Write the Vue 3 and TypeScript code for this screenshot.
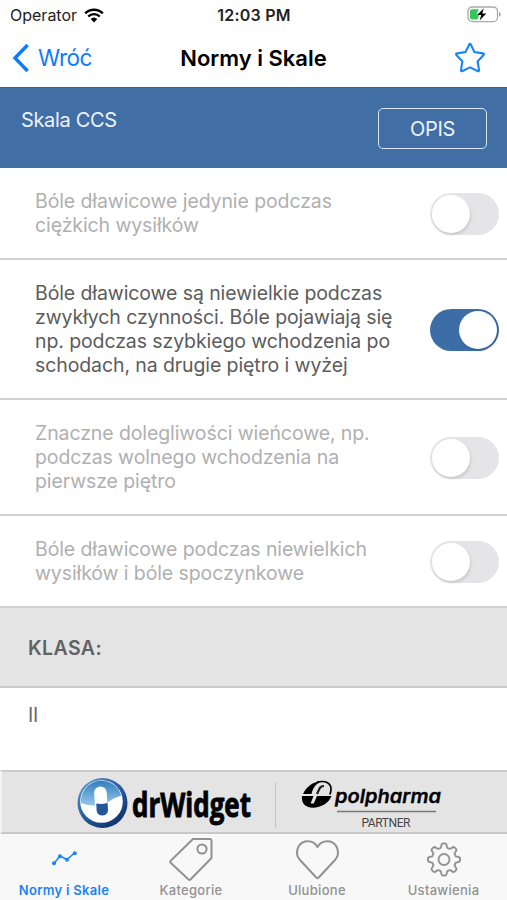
<script setup lang="ts">
import { ref } from 'vue'

interface Option {
  lines: string[]
  height: number
  on: boolean
}

const options = ref<Option[]>([
  { lines: ['Bóle dławicowe jedynie podczas', 'ciężkich wysiłków'], height: 92, on: false },
  {
    lines: [
      'Bóle dławicowe są niewielkie podczas',
      'zwykłych czynności. Bóle pojawiają się',
      'np. podczas szybkiego wchodzenia po',
      'schodach, na drugie piętro i wyżej',
    ],
    height: 140,
    on: true,
  },
  {
    lines: ['Znaczne dolegliwości wieńcowe, np.', 'podczas wolnego wchodzenia na', 'pierwsze piętro'],
    height: 116,
    on: false,
  },
  { lines: ['Bóle dławicowe podczas niewielkich', 'wysiłków i bóle spoczynkowe'], height: 92, on: false },
])

function select(index: number): void {
  options.value.forEach((o, i) => (o.on = i === index))
}

// Eight-toothed gear outline, sampled in polar coordinates
function gearOutline(cx: number, cy: number): string {
  const points: string[] = []
  for (let i = 0; i < 192; i++) {
    const a = (i / 192) * Math.PI * 2
    const r = 14 + 2.1 * Math.tanh(2.2 * Math.cos(8 * a))
    points.push(`${(cx + r * Math.sin(a)).toFixed(2)} ${(cy - r * Math.cos(a)).toFixed(2)}`)
  }
  return `M${points.join('L')}Z`
}
const gear = gearOutline(22, 22)
</script>

<template>
  <div class="screen">
    <div class="status">
      <span class="carrier">Operator</span>
      <svg class="wifi" width="20" height="15" viewBox="0 0 20 15">
        <path d="M1.2 5.4a12.6 12.6 0 0 1 17.6 0" />
        <path d="M4.2 8.5a8.3 8.3 0 0 1 11.6 0" />
        <path class="dot" d="M6.7 11.1a4.8 4.8 0 0 1 6.6 0L10 14.4z" />
      </svg>
      <span class="clock">12:03 PM</span>
      <svg class="battery" width="34" height="17" viewBox="0 0 34 17">
        <rect x="1" y="1" width="29.5" height="14.6" rx="4.2" fill="#fff" stroke="#aaa" stroke-width="1.3" />
        <path d="M32 5.8q1.800.6 1.800 2.500t-1.800 2.500z" fill="#aaa" />
        <path d="M5 3.200h6.700L9.500 8.600l2.500.4-1.500 4.400H5a2 2 0 0 1-2-2V5.200a2 2 0 0 1 2-2z" fill="#35c759" />
        <path d="M16.800 2.200 10.200 9h4l-1.500 5.500L19.300 7.500h-4z" fill="#000" />
      </svg>
    </div>

    <header class="nav">
      <button class="back">
        <svg width="18" height="30" viewBox="0 0 18 30"><path d="M15.600 2 3 15l12.600 13" /></svg>
        <span>Wróć</span>
      </button>
      <h1>Normy i Skale</h1>
      <svg class="star" width="32" height="32" viewBox="0 0 32 32">
        <path d="M15.100 2.700q.9-1.800 1.800 0l3.600 7.400 8.400 1.300q1.900.4.5 1.800l-5.800 6.200 1.400 8.500q.2 1.900-1.500 1.100L16 25.300l-7.500 3.700q-1.700.8-1.500-1.100l1.400-8.500-5.800-6.200q-1.400-1.400.5-1.800l8.400-1.300z" />
      </svg>
    </header>

    <section class="scale">
      <span class="scale-name">Skala CCS</span>
      <button class="describe">OPIS</button>
    </section>

    <ul class="options">
      <li v-for="(o, i) in options" :key="i" :class="{ on: o.on }" :style="{ height: o.height + 'px' }">
        <p><span v-for="line in o.lines" :key="line">{{ line }}</span></p>
        <button class="switch" role="switch" :aria-checked="o.on" @click="select(i)"><i></i></button>
      </li>
    </ul>

    <h2>KLASA:</h2>
    <div class="result">II</div>

    <div class="sponsors">
      <svg width="507" height="60" viewBox="0 0 507 60">
        <defs>
          <linearGradient id="ring" x1="0" y1="0" x2=".8" y2="1">
            <stop offset="0" stop-color="#65a3d8" />
            <stop offset=".45" stop-color="#2d66a8" />
            <stop offset="1" stop-color="#0d2d65" />
          </linearGradient>
          <linearGradient id="glass" x1="0" y1="0" x2="0" y2="1">
            <stop offset="0" stop-color="#347dbd" />
            <stop offset="1" stop-color="#94c6e9" />
          </linearGradient>
        </defs>
        <circle cx="102.500" cy="31" r="25" fill="url(#ring)" />
        <circle cx="101.500" cy="29.500" r="21.300" fill="#fff" />
        <path d="M81 31a20.600 20.600 0 0 1 40.300-7.500Q113 26 107 31q-13 5-26 0z" fill="url(#glass)" />
        <rect x="94.800" y="14.500" width="12.600" height="32" rx="6.300" fill="#fff" transform="rotate(-4 101 31)" />
        <path d="M96.300 31.500q6 1.200 11.200-.8l.5 7q0 5.300-5.400 5.800-5.300 0-6-5z" fill="#24589a" />
        <text class="dr" x="132" y="44.500" textLength="119" lengthAdjust="spacingAndGlyphs">drWidget</text>
        <path d="M275.500 10v46" stroke="#c4c4c4" />
        <g transform="translate(302 8.500)">
          <path d="M0 15.500h11.500L8.600 23h3.200l3.200-7.500h14.500C27 22.500 19 27 11 27.200 3 27.200-.8 22.500 0 15.500z" fill="#000" />
          <path d="M1 13.500C4.500 6 11.500 1 20 .6 13.500 3.500 11 7.500 9.500 13.500z" fill="#000" />
          <path d="M15 1.700C24-.5 29.500 3 29 9.500q-.2 2.500-1.200 4.500" fill="none" stroke="#000" stroke-width="1.700" />
          <path d="M15 13.500l2.700-5.800Q18.800 5.500 22 5.500" fill="none" stroke="#222" stroke-width="2.200" />
        </g>
        <text class="pol" x="335" y="30.500" textLength="106" lengthAdjust="spacingAndGlyphs">polpharma</text>
        <path d="M337 39.500h99" stroke="#777" stroke-width="1.500" />
        <text class="partner" x="361.500" y="55" textLength="49">PARTNER</text>
      </svg>
    </div>

    <nav class="tabs">
      <a class="active">
        <svg width="44" height="44" viewBox="0 0 44 44">
          <path d="m12 29.500 6-7.500 7 3.500 7.500-6.500" fill="none" stroke="currentColor" stroke-width="1.500" />
          <g fill="currentColor"><circle cx="12" cy="29.300" r="2" /><circle cx="18" cy="22.200" r="2" /><circle cx="25" cy="25.700" r="2" /><circle cx="32.800" cy="19.300" r="2" /></g>
        </svg>
        <span>Normy i Skale</span>
      </a>
      <a>
        <svg width="44" height="44" viewBox="0 0 44 44">
          <g fill="none" stroke="currentColor" stroke-width="2" stroke-linejoin="round">
            <path d="M24 5h16.500q2 0 2 2v17L21.500 45.500q-1 .8-2 0L1.700 28.700q-1-1 0-2z" />
            <circle cx="33" cy="15" r="4.600" />
          </g>
        </svg>
        <span>Kategorie</span>
      </a>
      <a>
        <svg width="44" height="44" viewBox="0 0 44 44">
          <path d="M22.500 13C18 5 7.500 5.500 3.500 12.500Q-.2 20 5 26L21.500 43.800q1 .9 2 0L40 26Q45.200 20 41.500 12.500C37.500 5.500 27 5 22.500 13z" fill="none" stroke="currentColor" stroke-width="2" stroke-linejoin="round" />
        </svg>
        <span>Ulubione</span>
      </a>
      <a>
        <svg width="44" height="44" viewBox="0 0 44 44">
          <g fill="none" stroke="currentColor" stroke-width="1.900" transform="translate(0 3.500)">
            <path :d="gear" />
            <circle cx="22" cy="22" r="5.500" />
          </g>
        </svg>
        <span>Ustawienia</span>
      </a>
    </nav>
  </div>
</template>

<style>
body {
  margin: 0;
  background: #fff;
}
</style>

<style scoped>
* {
  box-sizing: border-box;
}
.screen {
  width: 507px;
  height: 900px;
  display: flex;
  flex-direction: column;
  overflow: hidden;
  background: #fff;
  font-family: Inter, 'Liberation Sans', sans-serif;
}
button {
  padding: 0;
  border: 0;
  background: none;
  font: inherit;
  letter-spacing: inherit;
}
h1,
h2,
p,
ul {
  margin: 0;
  padding: 0;
}
.status {
  height: 30px;
  display: grid;
  grid-template-columns: 74px 60px 1fr 138px;
  align-items: center;
  padding: 0 6px 0 10px;
  font-size: 16px;
  color: #222;
  white-space: nowrap;
}
.wifi {
  fill: none;
  stroke: #000;
  stroke-width: 2.4;
}
.wifi .dot {
  fill: #000;
  stroke: none;
}
.clock {
  padding-left: 1px;
  text-align: center;
  font-weight: 600;
  letter-spacing: 0.2px;
}
.battery {
  justify-self: end;
  position: relative;
  top: -1px;
}
.nav {
  height: 57px;
  display: grid;
  grid-template-columns: 164px 1fr 156px;
  align-items: center;
  padding: 0 21px 2px 12px;
}
.back {
  display: flex;
  align-items: center;
  gap: 8px;
  color: #0d7bff;
  font-size: 22.500px;
  letter-spacing: -0.5px;
}
.back svg {
  fill: none;
  stroke: currentColor;
  stroke-width: 3.400;
}
h1 {
  padding-left: 1px;
  font-size: 22px;
  font-weight: 600;
  text-align: center;
  color: #000;
  white-space: nowrap;
}
.star {
  justify-self: end;
  fill: none;
  stroke: #1684fc;
  stroke-width: 2.100;
}
.scale {
  height: 81px;
  display: flex;
  justify-content: space-between;
  align-items: flex-start;
  padding: 20px 20px 0 21px;
  background: #426ea6;
  border-top: 1px solid #38639a;
  color: #edf3fb;
  font-size: 20px;
  letter-spacing: -0.35px;
}
.scale-name {
  line-height: 25px;
}
.describe {
  width: 109px;
  height: 41px;
  border: 1.500px solid #dce8f8;
  border-radius: 5px;
  color: #edf3fb;
}
.options {
  list-style: none;
}
li {
  display: flex;
  justify-content: space-between;
  align-items: center;
  padding: 0 8px 0 35px;
  border-bottom: 2px solid #d1d1d1;
  color: #b0b0b0;
  font-size: 19.500px;
  letter-spacing: -0.1px;
  line-height: 24px;
}
li.on {
  color: #5c5c5c;
}
li p span {
  display: block;
  white-space: nowrap;
}
.switch {
  width: 69px;
  height: 42px;
  flex: none;
  display: flex;
  padding: 2px;
  border-radius: 21px;
  background: #e5e5e7;
  position: relative;
  top: 1px;
}
.switch i {
  width: 38px;
  height: 38px;
  border-radius: 50%;
  background: #fff;
  box-shadow: 1px 2px 3px rgba(0, 0, 0, 0.12);
}
.on .switch {
  justify-content: flex-end;
  background: #3d6da7;
}
h2 {
  height: 80px;
  padding-left: 28px;
  background: #e4e4e4;
  border-bottom: 2px solid #cacaca;
  color: #626262;
  font-size: 19.500px;
  font-weight: 600;
  letter-spacing: 0.4px;
  line-height: 81px;
}
.result {
  height: 82px;
  padding: 15px 28px;
  color: #6a6a6a;
  font-size: 19.500px;
  letter-spacing: -0.3px;
  line-height: 24px;
}
.sponsors {
  height: 64px;
  flex: none;
  background: #e4e4e4;
  border-top: 2px solid #cbcbcb;
  border-bottom: 2px solid #c8c8c8;
  border-left: 2px solid #f4f4f4;
}
.sponsors svg {
  display: block;
  margin-left: -2px;
}
.dr {
  font: 700 34px 'Open Sans', sans-serif;
  stroke: #000;
  stroke-width: 0.9px;
}
.pol {
  font: italic 600 18.500px Inter, sans-serif;
  stroke: #000;
  stroke-width: 0.3px;
}
.partner {
  font: 400 12px Roboto, sans-serif;
  fill: #444;
}
.tabs {
  height: 66px;
  display: grid;
  grid-template-columns: 128px 126px 126px 127px;
  background: #f8f8f8;
}
.tabs a {
  display: flex;
  flex-direction: column;
  align-items: center;
  color: #929292;
  font-size: 13px;
  font-weight: 500;
  letter-spacing: 0.3px;
  line-height: 16px;
}
.tabs svg {
  overflow: visible;
  margin-bottom: 4px;
}
.tabs .active {
  color: #1a82fb;
  font-weight: 600;
}
</style>
